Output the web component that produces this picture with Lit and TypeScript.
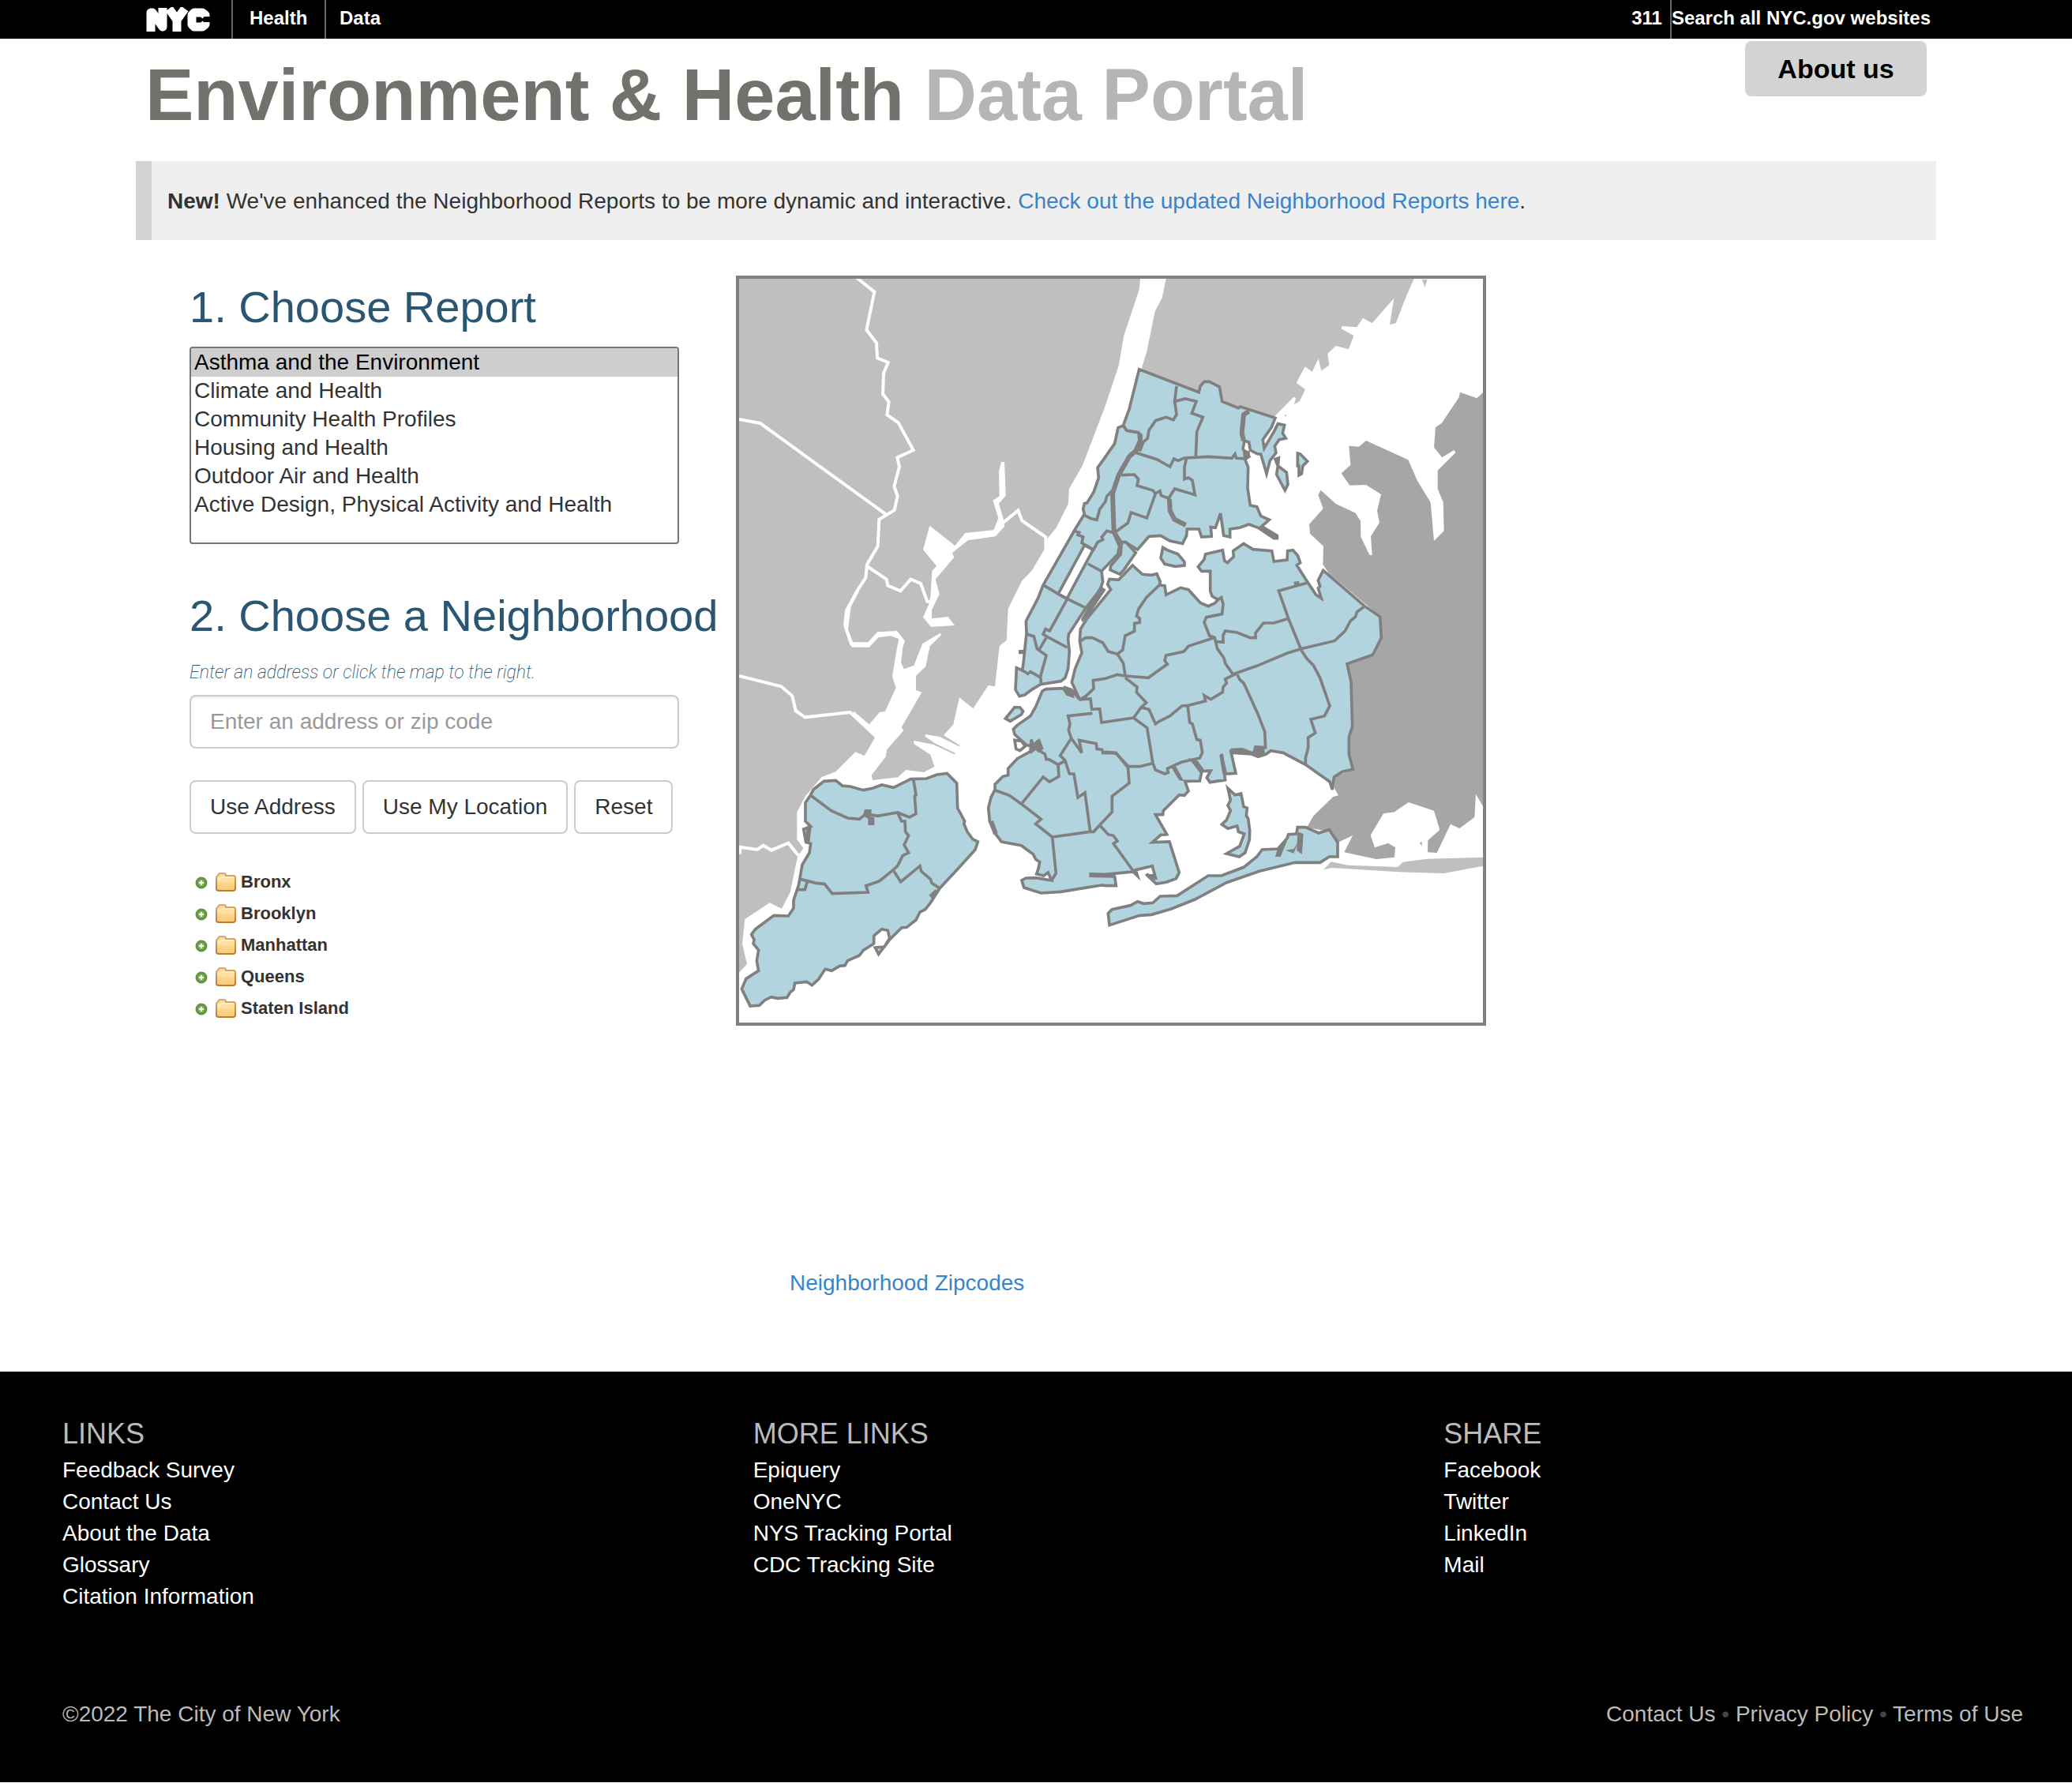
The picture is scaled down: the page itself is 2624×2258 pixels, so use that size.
import { LitElement, html, svg, css } from "lit";
import { customElement, state } from "lit/decorators.js";

type Tile = readonly [number, number];
type Run = readonly [Tile, string];

const A: Tile = [0, 0];
const B: Tile = [1410, 0];
const C: Tile = [0, 1425];
const D: Tile = [1410, 1425];
const M: Tile = [960, 885];

const trace = (...runs: Run[]): string =>
  runs
    .map(([[dx, dy], pts]) =>
      pts
        .trim()
        .split(/\s+/)
        .map((p) => {
          const [x, y] = p.split(",").map(Number);
          return `${x + dx},${y + dy}`;
        })
        .join(" "),
    )
    .join(" ");

const mainland: string[] = [
  trace(
    [A, "18,24"],
    [B, "132,24 128,65 70,240 50,355 0,505"],
    [A, "1323,733 1272,822 1268,880 1223,970 1190,1010 1178,1052 1130,1133 1092,1172 1040,1278 1034,1398 1008,1418 1005,1440"],
    [C, "990,148 965,144 907,232 855,190 832,292 795,334 857,372 854,376 780,339 727,330 725,338 762,364 839,401 836,406 755,368 682,354 682,366 745,407 760,452 720,474 652,465 622,493 525,504 521,485 575,415 580,388 643,315 635,303 712,170 690,162 690,108 727,72"],
    [A, "743,1420 786,1378 782,1370 715,1410 703,1440"],
    [C, "682,68 645,82 633,58 640,0"],
    [A, "648,1400 618,1362 543,1366 508,1405 450,1404 432,1355 443,1270 475,1210 465,1205 420,1283 414,1340 437,1410 447,1424 512,1424 547,1387 593,1381 625,1392 618,1425"],
    [C, "600,110 614,153 573,242 552,246 512,292 455,243 445,252 534,343 494,412 460,397 385,472 332,492 270,565 238,625 238,730 262,762 240,796 212,930 180,992 134,970 40,1032 30,1125 48,1202 18,1235"],
  ),
  trace([B, "230,24 215,97 188,148 157,300 138,362 145,375 400,480 640,550 715,473 723,478 717,502 738,488 759,444 725,420 758,358 785,377 809,328 820,373 850,353 844,308 875,279 924,292 943,240 896,214 898,204 955,208 978,173 1013,193 1096,98 1080,198 1103,193 1143,90 1172,24"]),
  trace([B, "1203,27 1223,27 1213,57"]),
  trace([B, "680,544 687,539 687,549"]),
  trace([D, "829,844 857,814 920,827 1110,834 1130,815 1223,803 1435,797 1435,830 1285,858 1115,853 860,837"]),
];

const longIsland: string[] = [
  trace(
    [B, "1435,455 1411,478 1347,455 1343,475 1277,573 1254,588 1248,665 1279,703 1324,675 1330,685 1262,752 1262,823 1283,872 1286,982 1248,1020 1235,873 1185,792 1150,712 990,639 963,662 925,659 931,732 896,763 928,809 990,807 1047,843 1032,905 1041,950 1008,1003 1013,1075 1003,1073 970,1005 969,945 950,914 875,879 818,827 808,845 827,897 774,957 777,992 828,1040 826,1110 850,1145 1045,1308 1050,1388 1020,1440"],
    [D, "1015,28 915,62 935,130 940,300 925,340 925,405 942,463 868,492 870,535 885,562 865,567 790,640 765,683 850,700 885,740 939,714 907,778 1029,804 1098,797 1101,760 1074,743 1023,760 1007,713 1056,631 1098,625 1151,588 1248,620 1270,693 1225,733 1224,778 1259,780 1311,671 1345,687 1402,645 1407,557 1435,605"],
  ),
  trace([D, "1194,742 1202,737 1202,756"]),
];

const rivers: string[] = [
  trace([A, "462,18 532,74 502,218 540,268 543,325 584,342 567,383 564,462 587,492 580,541 623,571 680,675 619,703 627,738 607,813 620,850 608,903 577,922 550,938 545,1040 504,1110 499,1160 465,1212 432,1275"]),
  trace([A, "18,558 98,573 577,920"]),
  trace([A, "504,1116 578,1166 583,1190 631,1210 670,1166 708,1182 733,1250 745,1250"]),
  trace([A, "1022,950 1078,904 1093,943 1183,1005 1183,1050"]),
  trace([C, "18,108 178,148 220,184 233,240 268,265 440,246 530,330"]),
  trace([C, "20,785 22,758 87,768 110,752 141,770 205,743 243,790"]),
];

const meadowlands = trace([A, "742,962 838,1038 877,990 985,979 1003,933 982,866 1007,850 1005,755 1014,720 1026,720 1031,848 1005,878 1024,942 1026,965 992,1003 888,1018 828,1065 835,1082 764,1166 779,1222 750,1282 750,1315 812,1308 837,1341 747,1347 717,1310 740,1258 745,1230 751,1135 768,1115 717,1053"]);

const boroughs: string[] = [
  trace(
    [B, "68,582 48,590 35,650 0,700"],
    [A, "1380,742 1384,780 1365,835 1340,875 1330,878 1325,900 1330,918 1295,975 1172,1190"],
    [M, "195,350 148,440 150,485 138,600 134,627 112,617 108,700 123,725 143,720 170,700 203,680 280,668 297,655 308,620 313,555 308,510 310,490 375,390 430,320 440,290 435,250 497,185 503,155 485,105 478,0"],
    [B, "25,840 50,770 95,690 130,670 135,620 125,608 80,600"],
  ),
  trace([B, "128,368 355,455 360,432 375,415 395,415 433,435 443,490 505,515 512,510 645,553 630,590 598,635 603,668 640,605 655,575 680,580 673,610 685,630 660,635 643,660 648,685 625,715 612,765 590,690 578,690 550,675 545,645 528,640 522,670 545,700 530,710 542,740 540,820 550,885 575,890 590,925 622,940 593,965 652,1000 652,1010 640,1010 580,970 545,957 510,970 473,975 473,1005 449,1000 437,915 418,970 400,968 403,1003 365,1005 355,975 310,975 308,1000 293,1030 245,1020 210,1000 165,1003 122,1053 75,1025 60,1025 35,985 25,840 50,770 95,690 130,670 135,620 125,608 80,600 68,580 90,520 110,440"]),
  trace(
    [M, "553,228 590,262 625,265 645,260 658,290 655,303 675,305 680,340 735,313 765,320 810,370 840,383 865,372"],
    [B, "428,1243 405,1230 398,1210 398,1135 365,1135 352,1118 375,1090 380,1070 445,1055 452,1095 463,1103 487,1080 485,1058 525,1030 560,1052 632,1058 640,1098 690,1092 692,1058 712,1055 730,1075 740,1103 727,1112 760,1165 800,1225 820,1238 808,1200 815,1192 808,1170 827,1132 985,1268 1043,1308 1048,1388 1022,1440"],
    [D, "1015,28 918,62 933,130 938,300 925,340 925,405 940,463 900,472 868,492 862,540 852,510 760,445 675,400 628,392 610,405 580,415 555,405 480,400 475,388 495,478 457,480 440,405 455,503 397,512 385,495 400,468 370,470 345,435 330,430 365,475 358,507 302,508 315,545 300,562 280,560 220,620 218,635 190,635 233,710 210,712 178,740 243,738 280,855 268,878 230,892 193,898 155,862 190,875 178,830 115,845 122,868 105,852 0,862 35,870 40,905 0,905"],
    [C, "1395,903 1350,910 1240,928 1165,933 1100,912 1092,885 1108,876 1145,875 1205,885 1192,855 1175,867 1148,860 1155,840 1160,815 1145,805 1135,785 1090,752 1015,738 990,705 970,660 965,610 975,570 990,540 990,520"],
    [M, "60,1030 80,1025 80,1000 115,962 165,935 168,890 180,920 150,910 105,870 100,850 115,835 165,800 185,765 210,705 225,698 290,695 305,718 325,725 320,700 290,690 320,700 352,738 322,672 335,620 360,560 352,515 355,470 380,430 470,320 458,300 465,280 500,283"],
  ),
  trace([C, "290,560 300,540 340,508 385,505 410,525 440,528 490,542 525,535 560,522 605,532 670,500 730,498 770,483 808,478 845,515 848,610 875,660 872,670 885,700 905,728 925,738 915,768 850,840 780,915 745,970 725,995 705,1005 690,1035 655,1063 635,1065 590,1110 548,1165 535,1140 570,1137 590,1105 583,1075 560,1070 530,1095 530,1125 490,1150 475,1170 430,1190 420,1208 400,1210 370,1228 345,1222 320,1260 295,1283 275,1270 230,1275 225,1300 212,1310 200,1330 165,1333 140,1328 115,1340 95,1360 60,1362 28,1297 45,1258 92,1228 85,1190 92,1150 72,1125 75,1110 65,1090 80,1070 150,1018 205,1020 225,990 225,960 245,900 258,825 285,780 290,745 272,740 263,690 290,680 270,660 270,590"]),
  trace([D, "15,1055 10,1010 25,995 95,980 122,965 145,973 180,970 208,945 272,943 390,867 440,867 525,835 575,795 595,768 655,765 690,725 695,710 725,708 730,683 760,683 810,705 850,692 882,740 882,795 850,795 815,817 720,817 585,850 460,893 340,957 250,993 175,1015 130,1018"]),
  trace([D, "465,535 492,560 515,555 525,605 538,610 535,640 542,650 548,695 547,730 530,780 508,795 460,783 510,755 527,708 505,700 500,678 465,688 442,672 460,655 475,620 465,600 475,580"]),
  trace([B, "218,1045 235,1055 275,1070 300,1100 300,1113 265,1117 225,1108 210,1085"]),
  trace([B, "658,705 655,735 688,760 693,805 682,828 650,768 655,735 645,710"]),
  trace([B, "730,687 740,690 767,718 750,735 745,765 735,770 735,735 730,735"]),
  trace([M, "515,140 528,140 565,180 520,245 505,262 468,245 470,230 508,185 510,150"]),
  trace([M, "70,810 105,767 125,768 137,782 130,795 88,820"]),
];

const coves: string[] = [
  trace([M, "370,152 403,168 303,355 270,337"]),
  trace([M, "105,892 110,925 125,932 145,915 130,895"]),
  trace([D, "735,708 746,712 742,775 732,768"]),
];

const districts: string[] = [
  trace([A, "1325,920 1355,935 1377,940 1388,900 1410,870 1415,850 1440,825"]),
  trace([M, "330,97 350,103 345,112 365,120 360,143 405,168 420,140 440,130 436,120 455,97 485,105"]),
  trace([M, "212,302 268,335 305,355 372,388"]),
  trace([M, "383,222 435,250"]),
  trace([M, "305,355 238,477 222,470 213,490 230,500 305,540"]),
  trace([M, "225,503 197,550"]),
  trace([M, "150,488 178,498 190,545 225,570 203,650 205,675"]),
  trace([M, "132,625 155,640 165,632 200,652"]),
  trace([B, "270,432 263,490 303,480 345,490 328,535 370,550 347,605 343,700"]),
  trace([B, "263,490 270,540 258,560 230,550 190,563 165,600 160,630 143,645 130,680"]),
  trace([B, "110,683 195,710 245,738 260,708 275,715 300,705 393,700 480,706 492,690 497,706 535,708"]),
  trace([B, "60,770 110,768 125,785 120,810 180,828 190,840 207,830 212,848 240,858 263,822 340,845 330,790 315,780 300,785 300,740 308,705"]),
  trace([B, "190,840 157,933 97,912 85,952 40,985"]),
  trace([M, "355,515 375,503 400,503 440,522 460,555 495,565 515,550 525,495 560,478 560,448 580,445 580,430 568,420 575,395 605,350 658,300"]),
  trace([M, "495,565 518,600 525,648"]),
  trace([M, "350,740 375,725 405,697 403,665 450,658 495,643 525,648 613,655 685,603 675,590 680,570 748,555 765,535 865,502"]),
  trace([M, "525,655 570,690 568,710 605,750 585,768 557,807 435,825 428,773 398,775 393,735 350,738"]),
  trace([M, "585,768 615,775 640,830 655,820 695,800 740,762 765,760 830,743 825,722 850,737 895,710 897,690 910,675 905,660 945,640"]),
  trace([B, "428,1243 440,1235 447,1260 443,1298 383,1310 375,1330 395,1380 415,1388"], [D, "425,5 450,40 455,60 483,100"]),
  trace([B, "418,1402 447,1405 447,1378 455,1362 500,1368 550,1388 570,1388 570,1370 600,1332 640,1332 695,1315"]),
  trace([B, "765,1180 658,1210 695,1315 742,1430"]),
  trace([B, "985,1268 955,1290 950,1308 930,1325 910,1362 870,1400 742,1430"], [D, "690,22 575,70 483,102"]),
  trace([D, "742,8 765,42 790,68 815,115 852,222 832,260 780,273 797,325 770,342 770,380 760,420 760,445"]),
  trace([D, "500,102 510,122 525,135 580,255 605,320 608,380 570,378 563,402"]),
  trace([D, "312,220 320,285 330,290 347,350 360,352 368,398 358,420 290,435 235,460 238,475 225,480 190,465 180,440 158,305 107,268"]),
  trace([D, "178,440 130,452 82,452 40,400 0,397"], [M, "440,940 437,928 417,925 415,905 350,892 360,940 320,885"]),
  trace([M, "400,790 308,800 315,830 310,855 320,885 278,950 297,970 313,1020 330,1020 345,1110 372,1092"], [C, "1352,700"]),
  trace([M, "193,890 203,935 220,945 225,965 235,965 270,985 273,1030 237,1050 213,1032 130,1135"]),
  trace([M, "270,985 297,970"]),
  trace([C, "990,542 1045,562 1095,598 1165,652 1145,670 1208,720 1222,858 1205,885"]),
  trace([C, "1208,720 1350,700 1365,700 1388,675 1420,710"], [D, "30,715 45,735 30,745 110,855"]),
  trace([M, "535,990 540,1055 475,1105"], [C, "1435,625 1388,675"]),
  trace([M, "440,940 490,942 535,990"]),
  trace([C, "290,562 368,620 430,648 475,652 500,632 545,640 620,627 665,645 690,632 685,565 690,560 680,500"]),
  trace([C, "620,627 635,660 648,660 650,700 662,715 645,750 662,780 640,790 620,830 600,848 550,888 500,905 508,930 372,935 342,898 310,895 250,880"]),
  trace([C, "605,848 632,890 705,830 710,850 745,880 750,895 780,915"]),
  trace([C, "278,886 268,920 243,920"]),
];

const channels: string[] = [
  trace([B, "130,612 132,640 115,678 90,700 50,770 27,840 32,985 55,1035"]),
  trace([B, "545,528 525,540 518,610 525,640"]),
  trace([B, "243,860 245,905 262,938 305,960"]),
  trace([B, "590,968 650,1006"]),
  trace([C, "745,948 770,925"]),
  trace([C, "1348,864 1445,866"]),
  trace([C, "975,660 993,708"]),
  trace([C, "284,680 277,740"]),
];

const shoals: string[] = [
  trace([M, "430,305 452,320 395,405 362,445 357,432"]),
  trace([M, "165,925 180,900 200,885 215,925 195,940 185,930 165,945"]),
  trace([M, "300,690 325,705 328,730 300,718"]),
  trace([M, "590,760 618,775 618,790"]),
  trace([B, "520,670 548,680 550,700 525,710"]),
  trace([B, "715,1175 735,1172 738,1188 718,1190"]),
  trace([C, "495,615 522,615 518,642 532,645 532,675 508,675 508,650 488,640"]),
  trace([D, "250,455 268,452 298,508 280,505"]),
  trace([D, "325,428 350,430 375,465 360,475"]),
  trace([D, "475,383 520,381 565,398 565,375 605,378 605,405 580,418 545,405 480,398"]),
  trace([D, "433,410 447,403 455,480 445,480"]),
  trace([D, "645,795 665,795 690,735 655,760"]),
  trace([D, "685,770 715,782 732,740 715,765"]),
  trace([D, "148,862 190,860 190,885"]),
  trace([M, "120,550 140,548 140,565 120,565"]),
];

const reports = [
  "Asthma and the Environment",
  "Climate and Health",
  "Community Health Profiles",
  "Housing and Health",
  "Outdoor Air and Health",
  "Active Design, Physical Activity and Health",
];

const footerColumns = [
  { title: "Links", items: ["Feedback Survey", "Contact Us", "About the Data", "Glossary", "Citation Information"] },
  { title: "More Links", items: ["Epiquery", "OneNYC", "NYS Tracking Portal", "CDC Tracking Site"] },
  { title: "Share", items: ["Facebook", "Twitter", "LinkedIn", "Mail"] },
];

@customElement("neighborhood-map")
export class NeighborhoodMap extends LitElement {
  static styles = css`
    :host { display: block; }
    .map { display: block; width: 100%; box-sizing: border-box; border: 4px solid #808080; background: #fff; }
    .mainland { fill: #bfbfbf; }
    .island { fill: #a6a6a6; }
    .water { fill: #fff; }
    .river { fill: none; stroke: #fff; stroke-width: 12; }
    .borough { fill: #b2d4de; stroke: #808080; stroke-width: 11; }
    .cove { fill: #fff; stroke: #808080; stroke-width: 11; }
    .district { fill: none; stroke: #808080; stroke-width: 11; }
    .channel { fill: none; stroke: #808080; stroke-width: 18; }
    .shoal { fill: #808080; }
  `;

  render() {
    const areas = (list: string[], name: string) => list.map((p) => svg`<polygon class=${name} points=${p} />`);
    const lines = (list: string[], name: string) => list.map((p) => svg`<polyline class=${name} points=${p} />`);
    return html`
      <svg class="map" viewBox="18 24 2826 2826" role="img" aria-label="Map of New York City neighborhoods">
        ${areas(mainland, "mainland")} ${areas(longIsland, "island")}
        ${lines(rivers, "river")} ${areas([meadowlands], "water")}
        ${areas(boroughs, "borough")} ${areas(coves, "cove")}
        ${lines(districts, "district")} ${lines(channels, "channel")} ${areas(shoals, "shoal")}
      </svg>
    `;
  }
}

@customElement("borough-tree")
export class BoroughTree extends LitElement {
  static styles = css`
    :host { display: block; }
    .tree { list-style: none; margin: 0; padding: 0; }
    .row { display: flex; align-items: center; height: 40px; padding: 0; border: 0; background: none; font: bold 22px "Liberation Sans", Arial, sans-serif; color: #333; }
    .plus { width: 16px; height: 16px; margin: 2px 10px 0 7px; }
    .folder { width: 26px; height: 24px; margin-right: 6px; }
  `;

  render() {
    return html`
      <ul class="tree">
        ${["Bronx", "Brooklyn", "Manhattan", "Queens", "Staten Island"].map(
          (name) => html`
            <li>
              <button class="row" type="button" aria-expanded="false">
                <svg class="plus" viewBox="0 0 16 16" aria-hidden="true">
                  <circle cx="8" cy="8" r="6" fill="#7fb35f" stroke="#5c9640" stroke-width="3" />
                  <path d="M8 5v6M5 8h6" stroke="#fff" stroke-width="2" />
                </svg>
                <svg class="folder" viewBox="0 0 26 24" aria-hidden="true">
                  <defs>
                    <linearGradient id="face" x1="0" y1="0" x2="0" y2="1">
                      <stop offset="0" stop-color="#fdd690" />
                      <stop offset="0.45" stop-color="#fee3a5" />
                      <stop offset="0.5" stop-color="#fdd88f" />
                      <stop offset="1" stop-color="#fbc878" />
                    </linearGradient>
                    <linearGradient id="edge" x1="0" y1="0" x2="0" y2="1">
                      <stop offset="0" stop-color="#d8ab6c" />
                      <stop offset="1" stop-color="#b97a3a" />
                    </linearGradient>
                  </defs>
                  <path d="M1 20V6L4 2Q4 1 6 1H11Q13 1 13 4H23Q25 4 25 6V20Q25 23 22 23H4Q1 23 1 20Z" fill="url(#face)" stroke="url(#edge)" stroke-width="2" />
                  <path d="M3 8Q7 8 9 6H23" fill="none" stroke="#fff0c4" stroke-width="2" />
                </svg>
                ${name}
              </button>
            </li>
          `,
        )}
      </ul>
    `;
  }
}

@customElement("app-root")
export class AppRoot extends LitElement {
  @state() private report = reports[0];

  static styles = css`
    :host { display: block; background: #fff; color: #333; font: 28px/40px "Liberation Sans", Arial, sans-serif; }
    * { box-sizing: border-box; }
    a { color: #3983cb; text-decoration: none; }

    .topbar { display: flex; height: 49px; padding: 0 172px 0 184px; background: #000; font-weight: bold; font-size: 24px; line-height: 45px; }
    .topbar a { color: #fff; }
    .brand { display: flex; align-items: center; width: 111px; border-right: 2px solid #666; }
    .logo { width: 82px; height: 32px; }
    .agency { width: 118px; padding-left: 21px; border-right: 2px solid #666; }
    .section { flex: 1; padding-left: 17px; }
    .search { border-left: 2px solid #666; margin-left: 10px; padding-right: 7px; }

    .masthead { display: flex; justify-content: space-between; align-items: flex-start; height: 155px; padding: 3px 184px 0; }
    .title { margin: 0; padding-top: 13px; font-size: 92px; line-height: 110px; font-weight: bold; color: #73716c; }
    .title-light { color: #b5b5b4; }
    .about { width: 230px; height: 70px; border: 0; border-radius: 8px; background: #d3d3d3; color: #000; font: bold 34px "Liberation Sans", Arial, sans-serif; }

    .notice { margin: 0 172px; padding: 31px 20px 29px; border-left: 20px solid #d3d3d3; background: #efefef; }

    .content { display: grid; grid-template-columns: 692px 950px; margin: 45px 240px 0; }
    .heading { margin: 0 0 12px; padding-top: 2px; font-size: 56px; line-height: 76px; font-weight: normal; color: #2b5672; white-space: nowrap; }
    .reports { display: block; width: 620px; height: 250px; margin-bottom: 51px; padding: 0; border: 2px solid #767676; border-radius: 4px; background: #fff; color: #333; font: inherit; overflow: hidden; outline: none; }
    .report { min-height: 36px; padding: 2px 4px 0; line-height: 34px; }
    .report:checked { background: #cecece linear-gradient(#cecece, #cecece); color: #000; }
    .hint { display: block; margin-top: 14px; font: italic 200 23px/40px Roboto, "Liberation Sans", sans-serif; color: #2b5672; }
    .address { display: block; width: 620px; height: 68px; margin: 8px 0 40px; padding: 0 24px; border: 2px solid #ccc; border-radius: 8px; font: inherit; color: #333; box-shadow: inset 0 2px 2px rgba(0, 0, 0, 0.08); }
    .address::placeholder { color: #999; }
    .actions { display: flex; gap: 8px; margin-bottom: 41px; }
    .action { height: 68px; padding: 0 24px; border: 2px solid #ccc; border-radius: 8px; background: #fff; color: #333; font: inherit; white-space: nowrap; }
    .zipcodes { margin: 306px 0 0 1000px; padding-bottom: 92px; }

    .footer { padding: 55px 0 66px; background: #000; color: #bbb; }
    .columns { display: grid; grid-template-columns: 1fr 1fr 1fr; }
    .column { padding-left: 79px; }
    .column-title { margin: 0 0 2px; font-size: 36px; line-height: 48px; font-weight: normal; text-transform: uppercase; }
    .links { list-style: none; margin: 0; padding: 0; }
    .links a { color: #fff; }
    .legal { display: flex; justify-content: space-between; margin-top: 109px; padding: 0 62px 0 79px; }
    .legal a { color: #bbb; }
    .dot { color: #444; }
  `;

  private choose(e: Event) {
    this.report = (e.target as HTMLSelectElement).value;
  }

  render() {
    return html`
      <header>
        <nav class="topbar">
          <a class="brand" href="#nyc" aria-label="NYC">
            <svg class="logo" viewBox="0 0 82 32" aria-hidden="true">
              <g fill="none" stroke="#fff" stroke-width="11" stroke-linejoin="round">
                <path d="M7 31V7H9L22 25V1" />
                <path d="M30 2L40 16L50 2M40 14V31" />
                <path d="M76 12V10L72 7H62L59 10V22L62 25H72L76 22V19" />
              </g>
            </svg>
          </a>
          <a class="agency" href="#health">Health</a>
          <span class="section"><a href="#data">Data</a></span>
          <a href="#311">311</a>
          <a class="search" href="#search">Search all NYC.gov websites</a>
        </nav>
        <div class="masthead">
          <h1 class="title">Environment &amp; Health <span class="title-light">Data Portal</span></h1>
          <button class="about" type="button">About us</button>
        </div>
      </header>

      <div class="notice">
        <strong>New!</strong> We've enhanced the Neighborhood Reports to be more dynamic and interactive.
        <a href="#reports">Check out the updated Neighborhood Reports here</a>.
      </div>

      <main>
        <div class="content">
          <section>
            <h2 class="heading"><label for="report">1. Choose Report</label></h2>
            <select class="reports" id="report" size="7" @change=${this.choose}>
              ${reports.map((r) => html`<option class="report" value=${r} ?selected=${r === this.report}>${r}</option>`)}
            </select>
            <h2 class="heading">2. Choose a Neighborhood</h2>
            <label class="hint" for="address">Enter an address or click the map to the right.</label>
            <input class="address" id="address" type="text" placeholder="Enter an address or zip code" />
            <div class="actions">
              <button class="action" type="button">Use Address</button>
              <button class="action" type="button">Use My Location</button>
              <button class="action" type="button">Reset</button>
            </div>
            <borough-tree></borough-tree>
          </section>
          <neighborhood-map></neighborhood-map>
        </div>
        <div class="zipcodes"><a href="#zipcodes">Neighborhood Zipcodes</a></div>
      </main>

      <footer class="footer">
        <div class="columns">
          ${footerColumns.map(
            (c) => html`
              <section class="column">
                <h3 class="column-title">${c.title}</h3>
                <ul class="links">
                  ${c.items.map((i) => html`<li><a href="#link">${i}</a></li>`)}
                </ul>
              </section>
            `,
          )}
        </div>
        <div class="legal">
          <span>©2022 The City of New York</span>
          <span>
            <a href="#contact">Contact Us</a> <span class="dot">•</span>
            <a href="#privacy">Privacy Policy</a> <span class="dot">•</span>
            <a href="#terms">Terms of Use</a>
          </span>
        </div>
      </footer>
    `;
  }
}
